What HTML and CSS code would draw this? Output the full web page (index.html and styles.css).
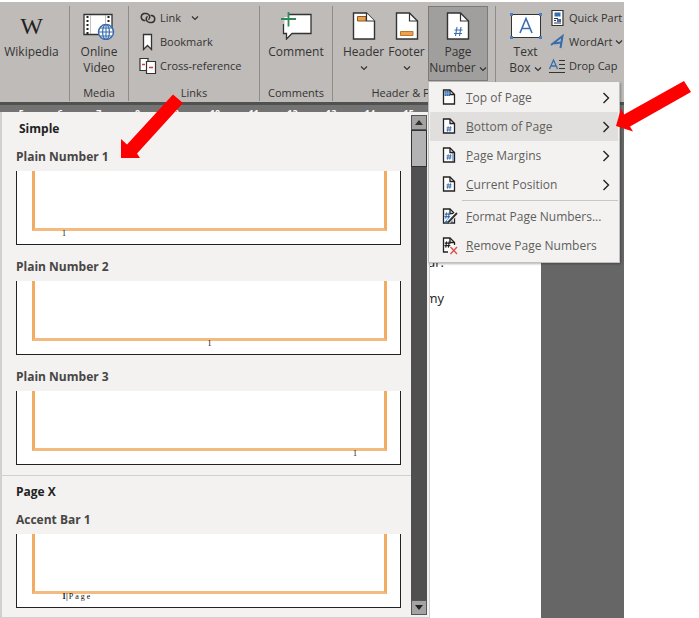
FILE: index.html
```html
<!DOCTYPE html>
<html lang="en">
<head>
<meta charset="utf-8">
<title>Page Number gallery</title>
<link rel="stylesheet" href="styles.css">
</head>
<body>
<svg class="defs" aria-hidden="true">
  <symbol id="chevron-down" viewBox="0 0 8 6"><path d="M1 1.500 4 4.500 7 1.500" fill="none" stroke="#333" stroke-width="1.200"/></symbol>
  <symbol id="chevron-right" viewBox="0 0 8 12"><path d="M1.500 1 6.500 6 1.500 11" fill="none" stroke="#222" stroke-width="1.400"/></symbol>
  <symbol id="sheet" viewBox="0 0 14 16"><path d="M1.500 1H8L12.500 5.500V15H1.500Z" fill="#fff" stroke="#222" stroke-width="1.300"/><path d="M8 1V5.500H12.500" fill="none" stroke="#222" stroke-width="1.300"/></symbol>
  <symbol id="hash" viewBox="0 0 8 8"><path d="M3 .5 2 7.500M6 .5 5 7.500M.8 2.500H7.500M.5 5.300H7.200" fill="none" stroke="currentColor" stroke-width="1.300"/></symbol>
</svg>
<div class="stage">
  <div class="app">
    <header class="ribbon">
      <section class="group group-wiki">
        <div class="tools">
          <button class="big"><span class="big-icon wiki">W</span><span>Wikipedia</span></button>
        </div>
      </section>
      <section class="group group-media">
        <div class="tools">
          <button class="big">
            <svg class="big-icon" width="32" height="28" viewBox="0 0 32 28">
              <path d="M1 2.500H29V22.500H1Z" fill="#fff" stroke="#333" stroke-width="1.300"/>
              <path d="M4.500 4V22M25.500 4V12" stroke="#222" stroke-width="2" stroke-dasharray="2 2"/>
              <path d="M7.500 3V22M22.500 3V12" stroke="#999" stroke-width=".6"/>
              <circle cx="23" cy="20" r="7.500" fill="#fff" stroke="#3a6dac" stroke-width="1.500"/>
              <ellipse cx="23" cy="20" rx="3.400" ry="7.500" fill="none" stroke="#3a6dac" stroke-width="1.200"/>
              <path d="M15.500 20H30.500M17 16H29M17 24H29M23 12.500V27.500" stroke="#3a6dac" stroke-width="1.100"/>
            </svg>
            <span>Online<br>Video</span>
          </button>
        </div>
        <h2>Media</h2>
      </section>
      <section class="group group-links">
        <div class="tools rows">
          <button class="row">
            <svg width="18" height="14" viewBox="0 0 18 14" fill="none" stroke="#333" stroke-width="1.500"><path d="M6.500 9.500H5A3.600 3.600 0 0 1 5 2.500H7.500A3.600 3.600 0 0 1 9.500 8.800"/><path d="M11.500 4.500H13A3.600 3.600 0 0 1 13 11.500H10.500A3.600 3.600 0 0 1 8.500 5.200"/></svg>
            <span>Link</span><svg class="spaced" width="8" height="6"><use href="#chevron-down"/></svg>
          </button>
          <button class="row">
            <svg width="18" height="18" viewBox="0 0 18 18"><path d="M4.500 1.500H12.500V16.500L8.500 12.500 4.500 16.500Z" fill="#fff" stroke="#333" stroke-width="1.300"/></svg>
            <span>Bookmark</span>
          </button>
          <button class="row">
            <svg width="18" height="18" viewBox="0 0 18 18"><path d="M1 1.500H9V13.500H1Z" fill="#fff" stroke="#333" stroke-width="1.200"/><path d="M7.500 4.500H16.500V16.500H7.500Z" fill="#fff" stroke="#333" stroke-width="1.200"/><path d="M3 7.500H6M10 10.500H14" stroke="#d23b3b" stroke-width="1.300"/></svg>
            <span>Cross-reference</span>
          </button>
        </div>
        <h2>Links</h2>
      </section>
      <section class="group group-comments">
        <div class="tools">
          <button class="big">
            <svg class="big-icon" width="32" height="28" viewBox="0 0 32 28">
              <path d="M3.500 2.500H31V21.500H12L6.500 27V21.500H3.500Z" fill="#fff" stroke="#333" stroke-width="1.300"/>
              <path d="M0 0H9V5H4V12H0Z" fill="#bfbbb8"/>
              <path d="M8.500 0V14.500M1 7H16" stroke="#2f8a57" stroke-width="1.800"/>
            </svg>
            <span>Comment</span>
          </button>
        </div>
        <h2>Comments</h2>
      </section>
      <section class="group group-header">
        <div class="tools">
          <button class="big">
            <svg class="big-icon" width="24" height="28" viewBox="0 0 24 28"><path d="M1.500 1H14.500L22.500 9V27H1.500Z" fill="#fff" stroke="#333" stroke-width="1.400"/><path d="M5.500 4.500H14V9H5.500Z" fill="#f0a04b" stroke="#8a5a24"/><path d="M14.500 1V9H22.500" fill="#fff" stroke="#333" stroke-width="1.200"/></svg>
            <span>Header</span><svg class="below" width="8" height="6"><use href="#chevron-down"/></svg>
          </button>
          <button class="big">
            <svg class="big-icon" width="24" height="28" viewBox="0 0 24 28"><path d="M1.500 1H14.500L22.500 9V27H1.500Z" fill="#fff" stroke="#333" stroke-width="1.400"/><path d="M14.500 1V9H22.500" fill="none" stroke="#333" stroke-width="1.200"/><path d="M5.500 19.500H18V23.500H5.500Z" fill="#f0a04b" stroke="#b97830"/></svg>
            <span>Footer</span><svg class="below" width="8" height="6"><use href="#chevron-down"/></svg>
          </button>
          <button class="big pressed" aria-expanded="true">
            <svg class="big-icon" width="24" height="28" viewBox="0 0 24 28"><path d="M1.500 1H14.500L22.500 9V27H1.500Z" fill="#fff" stroke="#333" stroke-width="1.400"/><path d="M14.500 1V9H22.500" fill="none" stroke="#333" stroke-width="1.200"/><path d="M11 15 9.500 24M15 15 13.500 24M8.500 18H16.500M8 21.500H16" stroke="#3a6dac" stroke-width="1.100"/></svg>
            <span>Page<br>Number <svg width="8" height="6"><use href="#chevron-down"/></svg></span>
          </button>
        </div>
        <h2>Header &amp; Footer</h2>
      </section>
      <section class="group group-text">
        <div class="tools">
          <button class="big">
            <svg class="big-icon" width="34" height="28" viewBox="0 0 34 28"><path d="M2.500 2.500H31.500V25.500H2.500Z" fill="#fff" stroke="#333"/><path d="M11 21 17 6.500 23 21M13 16.500H21" fill="none" stroke="#3a6dac" stroke-width="1.600"/><path d="M1 1h3v3H1zM30 1h3v3h-3zM1 24h3v3H1zM30 24h3v3h-3z" fill="#4f7fc0"/></svg>
            <span>Text<br>Box <svg width="8" height="6"><use href="#chevron-down"/></svg></span>
          </button>
          <div class="rows">
            <button class="row">
              <svg width="18" height="18" viewBox="0 0 18 18"><path d="M4 1.500H15V16.500H4Z" fill="#fff" stroke="#333" stroke-width="1.200"/><path d="M6.500 3.500h6v4h-6z" fill="#3a6dac"/><path d="M6 9.500H10M6 11.500H8M6 14H13" stroke="#333"/><path d="M9 10h4v3H9z" fill="#3a6dac"/></svg>
              <span>Quick Part</span>
            </button>
            <button class="row">
              <svg width="18" height="18" viewBox="0 0 18 18"><path d="M3 12 14.500 3 12.500 15M6 10.500 13 9.500" fill="none" stroke="#3a6dac" stroke-width="2"/></svg>
              <span>WordArt</span><svg width="8" height="6"><use href="#chevron-down"/></svg>
            </button>
            <button class="row">
              <svg width="18" height="18" viewBox="0 0 18 18"><path d="M1.500 12 5.500 3 9.500 12M3 9H8" fill="none" stroke="#3a6dac" stroke-width="1.300"/><path d="M11 3.500H17M11 7.500H17M11 11.500H17M1 15.500H17" stroke="#333" stroke-width="1.200"/></svg>
              <span>Drop Cap</span>
            </button>
          </div>
        </div>
      </section>
    </header>
    <div class="ruler">
      <span>5</span><span>6</span><span>7</span><span>8</span><span>9</span><span>10</span><span>11</span><span>12</span><span>13</span><span>14</span><span>15</span>
    </div>
    <main class="workspace">
      <article class="page"><p>ur.</p><p>my</p></article>
    </main>
  </div>

  <aside class="gallery" aria-label="Bottom of Page gallery">
    <div class="gallery-list">
      <section class="gallery-section first">
        <h3>Simple</h3>
        <h4>Plain Number 1</h4>
        <div class="preview"><div class="frame"></div><p>1</p></div>
        <h4>Plain Number 2</h4>
        <div class="preview center"><div class="frame"></div><p>1</p></div>
        <h4>Plain Number 3</h4>
        <div class="preview right"><div class="frame"></div><p>1</p></div>
      </section>
      <section class="gallery-section">
        <h3>Page X</h3>
        <h4>Accent Bar 1</h4>
        <div class="preview"><div class="frame"></div><p><b>1|</b><span class="tracked">Page</span></p></div>
      </section>
    </div>
    <div class="scrollbar">
      <button aria-label="Scroll up"><svg width="8" height="5" viewBox="0 0 8 5"><path d="M0 5 4 0 8 5Z" fill="#333"/></svg></button>
      <div class="thumb"></div>
      <button class="down" aria-label="Scroll down"><svg width="8" height="5" viewBox="0 0 8 5"><path d="M0 0 4 5 8 0Z" fill="#222"/></svg></button>
    </div>
  </aside>

  <nav class="menu" aria-label="Page Number">
    <button class="item"><svg width="16" height="18" viewBox="0 0 16 18"><use href="#sheet" width="14" height="16"/><path d="M2.500 2H8V7H2.500Z" fill="#3a6dac"/><path d="M4.300 2V7M6.300 2V7M2.500 4.300H8" stroke="#9fbfe6" stroke-width=".6"/></svg><span><u>T</u>op of Page</span><svg width="8" height="12"><use href="#chevron-right"/></svg></button>
    <button class="item active"><svg class="blue" width="16" height="18" viewBox="0 0 16 18"><use href="#sheet" width="14" height="16"/><use href="#hash" x="4" y="8" width="6" height="6"/></svg><span><u>B</u>ottom of Page</span><svg width="8" height="12"><use href="#chevron-right"/></svg></button>
    <button class="item"><svg class="blue" width="16" height="18" viewBox="0 0 16 18"><use href="#sheet" width="14" height="16"/><use href="#hash" x="4" y="7" width="6" height="6"/><path d="M11 6V14" stroke="#3a6dac"/></svg><span><u>P</u>age Margins</span><svg width="8" height="12"><use href="#chevron-right"/></svg></button>
    <button class="item"><svg class="blue" width="16" height="18" viewBox="0 0 16 18"><use href="#sheet" width="14" height="16"/><use href="#hash" x="4" y="7" width="6" height="6"/></svg><span><u>C</u>urrent Position</span><svg width="8" height="12"><use href="#chevron-right"/></svg></button>
    <hr>
    <button class="item"><svg class="blue" width="16" height="18" viewBox="0 0 16 18"><use href="#sheet" width="14" height="16"/><use href="#hash" x="2" y="4" width="7" height="7"/><path d="M2 15 7 9 11 13 9 15Z" fill="#3a6dac"/><path d="M6 14 15 5" stroke="#fff" stroke-width="4"/><path d="M6 14.500 15 5" stroke="#333" stroke-width="2"/></svg><span><u>F</u>ormat Page Numbers...</span></button>
    <button class="item"><svg width="16" height="18" viewBox="0 0 16 18"><path d="M6 15H1.500V1H8L12.500 5.500V8" fill="#fff" stroke="#222" stroke-width="1.300"/><path d="M8 1V5.500H12.500" fill="none" stroke="#222" stroke-width="1.300"/><use href="#hash" x="2" y="4" width="7" height="7"/><path d="M8.500 10 15 17M15 10 8.500 17" stroke="#d9534f" stroke-width="1.400"/></svg><span><u>R</u>emove Page Numbers</span></button>
  </nav>

  <svg class="arrow arrow-gallery" width="64" height="64" viewBox="0 0 64 64" aria-hidden="true"><path d="M53 .5 63 9 17 59.500 20 64H1V45L7 50.500Z" fill="#f00"/></svg>
  <svg class="arrow arrow-menu" width="76" height="52" viewBox="0 0 76 52" aria-hidden="true"><path d="M69 1 76 12 15 46.500 18 51.500 1 46 6 28.500 9 34.500Z" fill="#f00"/></svg>
</div>
</body>
</html>
```

FILE: styles.css
```css
* { box-sizing: border-box; }

body {
  margin: 0;
  background: #fff;
  color: #333;
  font: 12px/16px "Open Sans", "Noto Sans", sans-serif;
}

h2, h3, h4, p { margin: 0; font: inherit; }

button {
  margin: 0;
  padding: 0;
  border: 0;
  background: none;
  color: inherit;
  font: inherit;
}

.defs { position: absolute; width: 0; height: 0; }

.stage {
  position: relative;
  min-height: 100vh;
  padding: 2px 75px 0 0;
  overflow: hidden;
}

.app {
  display: flex;
  flex-direction: column;
  min-height: calc(100vh - 2px);
}

/* Ribbon */
.ribbon {
  display: flex;
  height: 103px;
  padding: 4px 0 1px;
  overflow: hidden;
  background: #bfbbb8;
  border-bottom: 3px solid #505250;
}

.group {
  display: flex;
  flex-direction: column;
  justify-content: space-between;
  flex: none;
  border-right: 1px solid #8f8c8a;
}

.group h2 {
  font-size: 11px;
  text-align: center;
  white-space: nowrap;
}

.group-wiki { width: 70px; }
.group-media { width: 59px; }
.group-links { width: 131px; }
.group-comments { width: 73px; }
.group-header { width: 163px; }
.group-text { flex: 1; border-right: 0; }

.tools { display: flex; justify-content: center; }
.group-wiki .tools { padding-right: 6px; }
.group-header .tools,
.group-text .tools { justify-content: flex-start; padding-left: 9px; }

.tools.rows { justify-content: flex-start; padding-left: 10px; }

.big {
  display: flex;
  flex-direction: column;
  align-items: center;
  height: 75px;
  padding-top: 5px;
  border: 1px solid transparent;
  line-height: 16px;
  white-space: nowrap;
}

.big-icon { flex: none; height: 28px; margin-bottom: 4px; }
.big .below { margin-top: 5px; }
.group-header .big { width: 43px; }
.group-header .pressed {
  width: 60px;
  background: #a19f9d;
  border-color: #7c7a78;
}
.group-text .big { width: 41px; }

.wiki {
  font: 24px/28px "Liberation Serif", serif;
  color: #222;
}

.rows { display: flex; flex-direction: column; }

.row {
  display: flex;
  align-items: center;
  gap: 3px;
  height: 24px;
  font-size: 11px;
  white-space: nowrap;
}

.row svg { flex: none; }
.row .spaced { margin-left: 7px; }
.group-text .rows { padding-left: 2px; }

/* Ruler and document */
.ruler {
  display: flex;
  height: 18px;
  padding: 0 196px 0 2px;
  background: #737373;
  color: #fff;
  font-size: 9px;
  font-weight: 700;
  line-height: 16px;
}

.ruler span { flex: 1; text-align: center; }

.workspace {
  flex: 1;
  display: flex;
  padding-right: 83px;
  background: #666;
}

.page {
  flex: 1;
  padding: 130px 97px 0 0;
  background: #fff;
  color: #222;
  font-size: 13px;
  line-height: 18px;
  text-align: right;
}

.page p { margin-bottom: 18px; }

/* Gallery popup */
.gallery {
  position: absolute;
  top: 112px;
  bottom: 0;
  left: 0;
  display: flex;
  width: 430px;
  background: #f3f2f1;
  border: solid #d0d0d0;
  border-width: 0 1px 1px 2px;
}

.gallery-list { flex: 1; }

.gallery-section { padding: 8px 10px 9px 14px; }
.gallery-section.first { padding: 9px 10px 10px 14px; border-bottom: 1px solid #d2d0ce; }
.gallery h3 { margin-bottom: 12px; color: #222; font-weight: 700; }
.first h3 { padding-left: 3px; }
.gallery h4 { margin-bottom: 6px; color: #484644; font-weight: 700; }

.preview {
  height: 74px;
  margin-bottom: 14px;
  padding: 0 13px 0 15px;
  background: #fff;
  border: solid #222;
  border-width: 0 1px 1px;
}

.preview:last-child { margin-bottom: 0; }

.frame {
  height: 60px;
  border: solid #f0ad62;
  border-width: 0 3px 3px;
  border-bottom-color: #f3bb80;
}

.preview p {
  padding: 0 30px;
  color: #111;
  font: 8px/6px "Liberation Serif", serif;
}

.preview.center p { text-align: center; }
.preview.right p { text-align: right; }
.tracked { margin-left: 1px; letter-spacing: 2px; }

.scrollbar {
  display: flex;
  flex-direction: column;
  width: 18px;
  margin-top: 3px;
  margin-bottom: 2px;
  background: #505050;
  border-right: 2px solid #f3f2f1;
}

.scrollbar button {
  display: flex;
  align-items: center;
  justify-content: center;
  height: 15px;
  background: #a3a3a3;
  border: 1px solid #555;
}

.scrollbar .down { margin-top: auto; }
.thumb { height: 37px; background: #b3b3b3; border: 1px solid #333; }

/* Page Number menu */
.menu {
  position: absolute;
  top: 82px;
  left: 428px;
  display: flex;
  flex-direction: column;
  width: 192px;
  padding: 1px 1px 2px;
  background: #f3f2f1;
  border: 1px solid #c0c0c0;
  border-top: 0;
  box-shadow: 1px 1px 2px rgba(0, 0, 0, .3);
}

.item {
  display: flex;
  align-items: center;
  height: 29px;
  padding: 0 8px 0 12px;
  color: #605e5c;
  text-align: left;
  white-space: nowrap;
}

.item span { flex: 1; margin-left: 8px; }
.item svg { flex: none; color: #222; }
.item .blue { color: #3a6dac; }
.item.active { background: #e1dfdd; }
.menu hr {
  width: 156px;
  height: 1px;
  margin: 1px 0 1px auto;
  border: 0;
  background: #c8c6c4;
}

/* Callout arrows */
.arrow { position: absolute; pointer-events: none; }
.arrow-gallery { top: 94px; left: 120px; }
.arrow-menu { top: 80px; left: 615px; }
```
